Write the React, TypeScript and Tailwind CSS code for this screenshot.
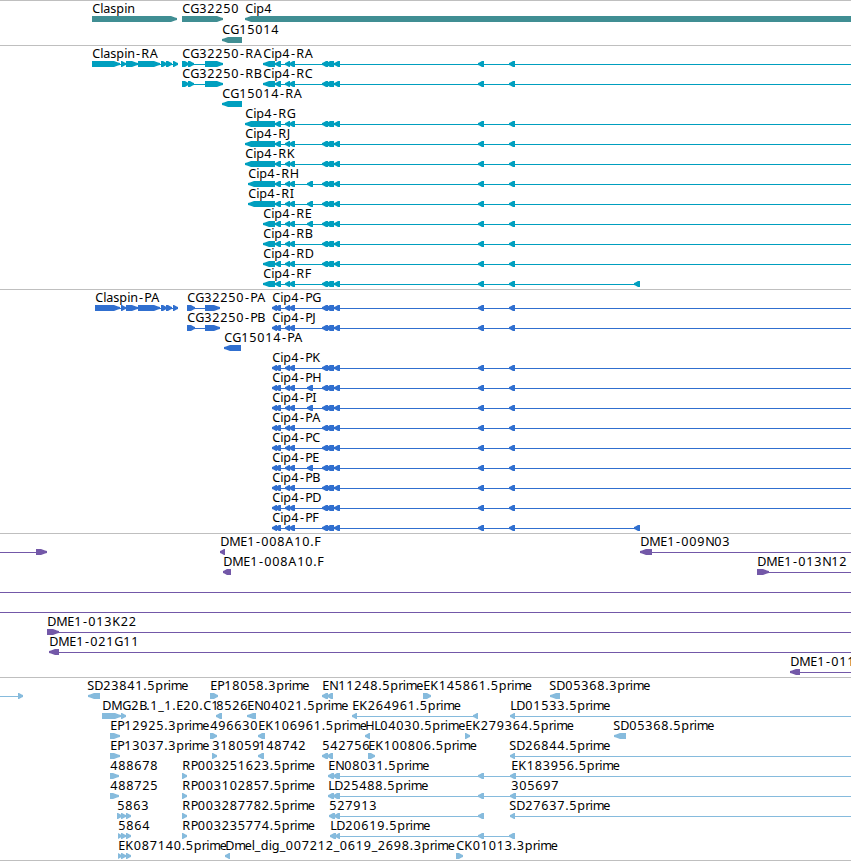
import React from "react";

type Feature = {
    x: number;
    label?: string;
    dir: "left" | "right";
    // [start, end] pairs
    exons: number[][];
    // intron line
    line?: [number, number];
};

const END = 851;

const CHAR_WIDTHS: Record<string, number> = {
    A: 9, B: 7, C: 8, D: 9, E: 7, F: 7, G: 9, H: 9, I: 3, J: 4, K: 8.5, L: 6, M: 11,
    N: 9, P: 7, R: 8.5, S: 7, a: 7, d: 8, e: 7, g: 8, i: 3, l: 3, m: 10.5, n: 8, p: 8,
    r: 4.5, s: 6, ".": 4, "-": 6, _: 6,
};

const charPositions = (x: number, text: string) => {
    const positions: number[] = [];
    let current = x;
    for (const char of text) {
        // hyphens sit in the middle of their cell
        positions.push(char === "-" ? current + 1 : current + 0.3);
        current += CHAR_WIDTHS[char] ?? 8;
    }
    return positions.join(" ");
};

const left = (x: number, label: string, exons: number[][], line?: [number, number]): Feature => ({
    x, label, dir: "left", exons, line,
});

const right = (x: number, label: string, exons: number[][], line?: [number, number]): Feature => ({
    x, label, dir: "right", exons, line,
});

const CIP4_SHARED = [[285, 290], [289, 295], [322, 328], [326, 334], [334, 340], [478, 484], [509, 515]];

const cip4Transcript = (label: string, x: number, extra: number[][] = [], end = END) =>
    left(x, label, [[x, 275], [275, 281], ...CIP4_SHARED, ...extra], [x, end]);

const cip4Protein = (label: string, extra: number[][] = [], end = END) =>
    left(272, label, [[272, 277], [275, 281], ...CIP4_SHARED, ...extra], [272, end]);

const claspin = (label: string, x: number) =>
    right(x, label, [[x, 120], [121, 126], [126, 138], [138, 160], [161, 167], [166, 172], [173, 178]], [x, 178]);

const EXTRA_EXON = [[307, 313]];
const LAST_EXON = [[634, 640]];

const genes: Feature[][] = [
    [
        right(92, "Claspin", [[92, 177]]),
        right(182, "CG32250", [[182, 223]]),
        left(245, "Cip4", [[245, 860]]),
    ],
    [left(222, "CG15014", [[222, 242]])],
];

const transcripts: Feature[][] = [
    [
        claspin("Claspin-RA", 92),
        right(182, "CG32250-RA", [[182, 189], [188, 194], [205, 223]], [182, 223]),
        cip4Transcript("Cip4-RA", 263),
    ],
    [
        right(182, "CG32250-RB", [[182, 189], [188, 194], [205, 223]], [182, 223]),
        cip4Transcript("Cip4-RC", 263),
    ],
    [left(222, "CG15014-RA", [[222, 242]])],
    [cip4Transcript("Cip4-RG", 245)],
    [cip4Transcript("Cip4-RJ", 245)],
    [cip4Transcript("Cip4-RK", 245)],
    [cip4Transcript("Cip4-RH", 248, EXTRA_EXON)],
    [cip4Transcript("Cip4-RI", 248, EXTRA_EXON)],
    [cip4Transcript("Cip4-RE", 263, EXTRA_EXON)],
    [cip4Transcript("Cip4-RB", 263)],
    [cip4Transcript("Cip4-RD", 263)],
    [cip4Transcript("Cip4-RF", 263, LAST_EXON, 640)],
];

const proteins: Feature[][] = [
    [
        claspin("Claspin-PA", 95),
        right(187, "CG32250-PA", [[187, 195], [205, 220]], [187, 220]),
        cip4Protein("Cip4-PG"),
    ],
    [
        right(187, "CG32250-PB", [[187, 195], [205, 220]], [187, 220]),
        cip4Protein("Cip4-PJ"),
    ],
    [left(224, "CG15014-PA", [[224, 241]])],
    [cip4Protein("Cip4-PK")],
    [cip4Protein("Cip4-PH", EXTRA_EXON)],
    [cip4Protein("Cip4-PI", EXTRA_EXON)],
    [cip4Protein("Cip4-PA")],
    [cip4Protein("Cip4-PC")],
    [cip4Protein("Cip4-PE", EXTRA_EXON)],
    [cip4Protein("Cip4-PB")],
    [cip4Protein("Cip4-PD")],
    [cip4Protein("Cip4-PF", LAST_EXON, 640)],
];

const clones: Feature[][] = [
    [
        right(0, "", [[36, 47]], [0, 47]),
        left(220, "DME1-008A10.F", [[220, 225]]),
        left(640, "DME1-009N03", [[640, 652]], [640, END]),
    ],
    [
        left(223, "DME1-008A10.F", [[223, 231]]),
        right(757, "DME1-013N12", [[757, 769]], [757, END]),
    ],
    [right(0, "", [], [0, END])],
    [right(0, "", [], [0, END])],
    [right(47, "DME1-013K22", [[47, 59]], [47, END])],
    [left(49, "DME1-021G11", [[49, 59]], [49, END])],
    [left(790, "DME1-011", [[790, 800]], [790, END])],
];

const ests: Feature[][] = [
    [
        right(0, "", [[18, 23]], [0, 23]),
        left(87, "SD23841.5prime", [[88, 100]]),
        right(210, "EP18058.3prime", [[210, 218]]),
        left(322, "EN11248.5prime", [[322, 328], [327, 333]]),
        right(423, "EK145861.5prime", [[423, 431]]),
        left(549, "SD05368.3prime", [[550, 560]]),
    ],
    [
        right(102, "DMG2B.1_1.E20.C1", [[102, 121], [121, 126]], [102, 126]),
        left(216, "8526", [[216, 222]]),
        left(247, "EN04021.5prime", [[247, 256]]),
        left(352, "EK264961.5prime", [[352, 357], [473, 478]], [352, 478]),
        left(510, "LD01533.5prime", [[510, 515]], [510, END]),
    ],
    [
        right(110, "EP12925.3prime", [[110, 120]]),
        right(210, "496630", [[210, 217]]),
        left(258, "EK106961.5prime", [[258, 265]]),
        left(365, "HL04030.5prime", [[365, 370]]),
        right(465, "EK279364.5prime", [[465, 470]]),
        left(613, "SD05368.5prime", [[614, 626]]),
    ],
    [
        right(110, "EP13037.3prime", [[110, 120]]),
        right(212, "318059", [[212, 217]]),
        left(258, "148742", [[258, 264]]),
        left(322, "542756", [[322, 328], [327, 333]]),
        right(368, "EK100806.5prime", [[368, 375]]),
        left(509, "SD26844.5prime", [[510, 515]], [510, END]),
    ],
    [
        right(110, "488678", [[110, 119]]),
        right(182, "RP003251623.5prime", [[182, 187]]),
        left(328, "EN08031.5prime", [[328, 334], [333, 340], [478, 484]], [328, 511]),
        left(511, "EK183956.5prime", [[510, 516]], [510, END]),
    ],
    [
        right(110, "488725", [[110, 119]]),
        right(182, "RP003102857.5prime", [[182, 187]]),
        left(328, "LD25488.5prime", [[328, 334], [333, 340], [478, 484]], [328, 511]),
        left(511, "305697", [[510, 516]], [510, END]),
    ],
    [
        right(117, "5863", [[117, 122], [121, 126], [126, 131]]),
        right(182, "RP003287782.5prime", [[182, 187]]),
        left(329, "527913", [[329, 335], [334, 340], [478, 484]], [329, 484]),
        left(509, "SD27637.5prime", [[510, 515]], [510, END]),
    ],
    [
        right(118, "5864", [[118, 122], [121, 126], [126, 131]]),
        right(182, "RP003235774.5prime", [[182, 187]]),
        left(330, "LD20619.5prime", [[330, 336], [335, 340], [478, 484], [509, 515]], [330, 515]),
    ],
    [
        right(118, "EK087140.5prime", [[118, 122], [121, 126], [126, 131]]),
        left(225, "Dmel_dig_007212_0619_2698.3prime", [[225, 230]]),
        right(456, "CK01013.3prime", [[456, 463]]),
    ],
];

const Exon = ({ start, end, dir }: { start: number; end: number; dir: "left" | "right" }) => {
    const width = end - start;
    const head = Math.min(width > 8 ? 6 : 4, width);
    const tip = dir === "right" ? end : start;
    const base = dir === "right" ? start : end;
    const back = dir === "right" ? -1 : 1;
    const neck = tip + back * head;
    const mid = tip + back * (head / 3);
    const points = `${base},13 ${neck},13 ${mid},14.5 ${tip},15 ${tip},17 ${mid},17.5 ${neck},19 ${base},19`;
    return <polygon points={points} fill="currentColor" />;
};

const Row = ({ features, className }: { features: Feature[]; className: string }) => (
    <svg className={`block w-[851px] shrink-0 overflow-visible ${className}`}>
        {features.map((feature, i) => (
            <g key={i}>
                {feature.line && (
                    <rect
                        x={feature.line[0]}
                        y={16}
                        width={feature.line[1] - feature.line[0]}
                        height={1}
                        fill="currentColor"
                    />
                )}
                {feature.exons.map(([start, end]) => (
                    <Exon key={start} start={start} end={end} dir={feature.dir} />
                ))}
                {feature.label && (
                    <text x={charPositions(feature.x, feature.label)} y={10} className="fill-black">
                        {feature.label}
                    </text>
                )}
            </g>
        ))}
    </svg>
);

const Track = ({ rows, color, rowHeight = "h-5" }: { rows: Feature[][]; color: string; rowHeight?: string }) => (
    <section className={`flex flex-col border-t border-[#bfbfbf] pt-0.5 ${color}`}>
        {rows.map((features, i) => (
            <Row key={i} features={features} className={rowHeight} />
        ))}
    </section>
);

const App = () => {
    return (
        <main className="w-[851px] h-[861px] overflow-hidden bg-white font-['Noto_Sans',sans-serif] text-[12.6px]">
            <Track rows={genes} color="text-[#408e93]" rowHeight="h-[21px]" />
            <div className="flex flex-col gap-px">
                <Track rows={transcripts} color="text-[#009fbf]" />
                <Track rows={proteins} color="text-[#306fcf]" />
                <Track rows={clones} color="text-[#7358a8]" />
                <Track rows={ests} color="text-[#86bbdd]" />
            </div>
            <div className="border-t border-[#bfbfbf]" />
        </main>
    );
};

export default App;
